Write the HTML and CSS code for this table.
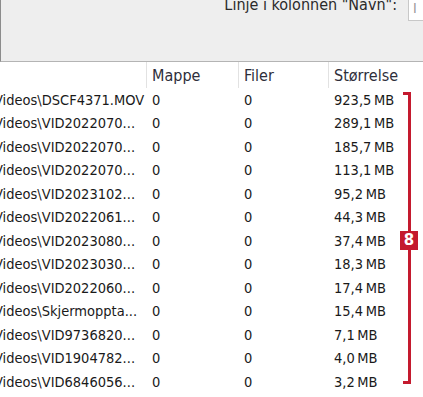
FILE: index.html
```html
<!DOCTYPE html>
<html>
<head>
<meta charset="utf-8">
<link rel="stylesheet" href="styles.css">
</head>
<body>
<div class="toolbar">
  <span class="label">Linje i kolonnen "Navn":</span>
  <span class="input">I</span>
</div>
<div class="list">
  <div class="row head">
    <div class="c name"></div>
    <div class="c sep">Mappe</div>
    <div class="c sep">Filer</div>
    <div class="c sep">Størrelse</div>
  </div>
  <div class="row"><div class="c name">Videos\DSCF4371.MOV</div><div class="c">0</div><div class="c">0</div><div class="c">923,5&#8201;MB</div></div>
  <div class="row"><div class="c name">Videos\VID2022070...</div><div class="c">0</div><div class="c">0</div><div class="c">289,1&#8201;MB</div></div>
  <div class="row"><div class="c name">Videos\VID2022070...</div><div class="c">0</div><div class="c">0</div><div class="c">185,7&#8201;MB</div></div>
  <div class="row"><div class="c name">Videos\VID2022070...</div><div class="c">0</div><div class="c">0</div><div class="c">113,1&#8201;MB</div></div>
  <div class="row"><div class="c name">Videos\VID2023102...</div><div class="c">0</div><div class="c">0</div><div class="c">95,2&#8201;MB</div></div>
  <div class="row"><div class="c name">Videos\VID2022061...</div><div class="c">0</div><div class="c">0</div><div class="c">44,3&#8201;MB</div></div>
  <div class="row"><div class="c name">Videos\VID2023080...</div><div class="c">0</div><div class="c">0</div><div class="c">37,4&#8201;MB</div></div>
  <div class="row"><div class="c name">Videos\VID2023030...</div><div class="c">0</div><div class="c">0</div><div class="c">18,3&#8201;MB</div></div>
  <div class="row"><div class="c name">Videos\VID2022060...</div><div class="c">0</div><div class="c">0</div><div class="c">17,4&#8201;MB</div></div>
  <div class="row"><div class="c name">Videos\Skjermoppta...</div><div class="c">0</div><div class="c">0</div><div class="c">15,4&#8201;MB</div></div>
  <div class="row"><div class="c name">Videos\VID9736820...</div><div class="c">0</div><div class="c">0</div><div class="c">7,1&#8201;MB</div></div>
  <div class="row"><div class="c name">Videos\VID1904782...</div><div class="c">0</div><div class="c">0</div><div class="c">4,0&#8201;MB</div></div>
  <div class="row"><div class="c name">Videos\VID6846056...</div><div class="c">0</div><div class="c">0</div><div class="c">3,2&#8201;MB</div></div>
  <div class="bracket"></div>
  <div class="badge">8</div>
</div>
</body>
</html>
```
FILE: styles.css
```css
html, body {
  margin: 0;
  padding: 0;
  background: #ffffff;
  overflow: hidden;
}
body {
  width: 423px;
  height: 397px;
  font-family: "DejaVu Sans Condensed", "DejaVu Sans", sans-serif;
  font-size: 14.5px;
  color: #1a1a1a;
}
.toolbar {
  height: 61px;
  background: #eeeeee;
  border-left: 1px solid #8c8c8c;
  border-bottom: 1px solid #b4b4b4;
  display: flex;
  justify-content: flex-end;
  align-items: flex-start;
  gap: 11px;
}
.label {
  margin-top: -4px;
  font-size: 16px;
  color: #2a2a2a;
  line-height: 18px;
}
.input {
  margin-top: -4px;
  height: 23px;
  width: 10px;
  background: #ffffff;
  border: 1px solid #c8c8c8;
  border-right: none;
  color: #9a9a9a;
  padding-left: 4px;
  line-height: 23px;
  font-size: 14px;
}
.list {
  position: relative;
}
.row {
  display: grid;
  grid-template-columns: 146px 92px 90px 1fr;
  height: 23.5px;
  align-items: center;
}
.row.head {
  height: 26px;
  align-items: stretch;
}
.head .c {
  display: flex;
  align-items: center;
  color: #2e2e3a;
  font-size: 16px;
}
.head .sep {
  border-left: 1px solid #e2e2e2;
  padding-left: 5px;
}
.c {
  white-space: nowrap;
  overflow: hidden;
  padding-left: 6px;
}
.c.name {
  padding-left: 0;
  text-indent: -6px;
}
.bracket {
  position: absolute;
  left: 403px;
  top: 30px;
  width: 5px;
  height: 286px;
  border-top: 3px solid #c41a2e;
  border-bottom: 3px solid #c41a2e;
  border-right: 3px solid #c41a2e;
}
.badge {
  position: absolute;
  left: 400px;
  top: 169px;
  width: 18px;
  height: 19px;
  background: #c41a2e;
  color: #ffffff;
  font-family: "DejaVu Sans", sans-serif;
  font-weight: bold;
  font-size: 15px;
  line-height: 19px;
  text-align: center;
}
```
